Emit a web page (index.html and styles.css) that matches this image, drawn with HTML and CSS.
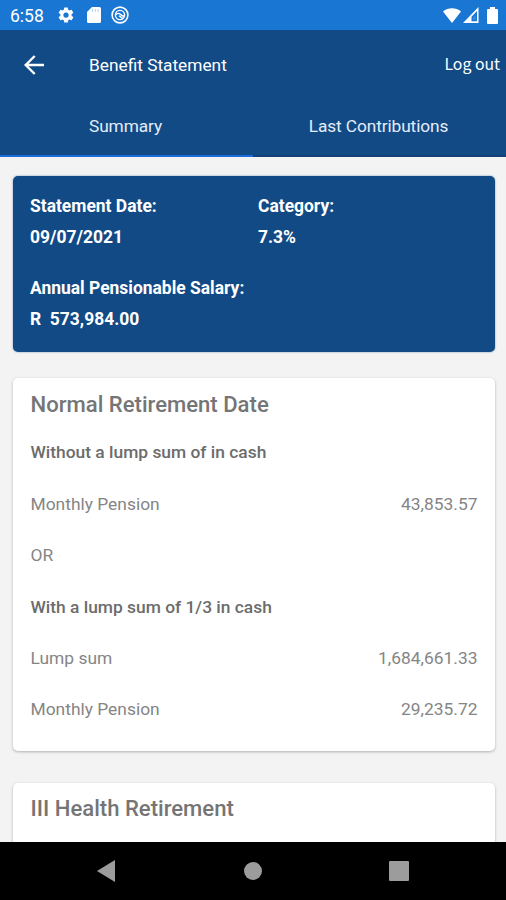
FILE: index.html
```html
<!DOCTYPE html>
<html lang="en">
<head>
<meta charset="utf-8">
<title>Benefit Statement</title>
<link rel="stylesheet" href="styles.css">
</head>
<body>
<div class="screen">
  <div class="status">
    <span class="clock">6:58</span>
    <svg class="gear" width="18" height="18" viewBox="0 0 24 24"><path fill="#fff" fill-rule="evenodd" d="M19.4 13a7.800 7.800 0 0 0 0-2l2.100-1.650a.5.5 0 0 0 .12-.64l-2-3.460a.5.5 0 0 0-.61-.22l-2.490 1a7.300 7.300 0 0 0-1.690-.98l-.38-2.650A.5.5 0 0 0 14 2h-4a.5.5 0 0 0-.49.42l-.38 2.650c-.61.25-1.170.58-1.690.98l-2.490-1a.5.5 0 0 0-.61.22l-2 3.460a.5.5 0 0 0 .12.64L4.570 11a7.900 7.900 0 0 0 0 2l-2.110 1.650a.5.5 0 0 0-.12.64l2 3.460c.12.22.39.3.61.22l2.490-1c.52.4 1.080.73 1.690.98l.38 2.650c.03.24.24.4.49.4h4c.25 0 .46-.18.49-.42l.38-2.650c.61-.25 1.170-.58 1.690-.98l2.490 1c.23.09.49 0 .61-.22l2-3.460a.5.5 0 0 0-.12-.64zM12 15.500a3.500 3.500 0 1 1 0-7 3.500 3.500 0 0 1 0 7z"/></svg>
    <svg class="sd" width="14" height="16" viewBox="0 0 14 16"><path fill="#fff" d="M5 0h7.500Q14 0 14 1.500v13q0 1.500-1.500 1.500h-11Q0 16 0 14.500V5z"/><path d="M5.500 2v3M8.300 2v3M11.100 2v3" stroke="#1976d2" stroke-width=".8" opacity=".4"/></svg>
    <svg class="disc" width="18" height="18" viewBox="0 0 18 18" fill="none" stroke="#fff"><circle cx="9" cy="9" r="7.900" stroke-width="1.600"/><circle cx="9" cy="9" r="4.600" stroke-width="1.400"/><path d="M4.800 8.600Q7.600 6.300 9.300 8.300T13.400 10.300M8 9.800L12 12.600" stroke-width="1.400"/></svg>
    <div class="signals">
      <svg width="18" height="15" viewBox="0 0 18 15"><path fill="#fff" d="M0 3.500C5-.9 13-.9 18 3.500L9 15z"/></svg>
      <svg class="cell" width="16" height="16" viewBox="0 0 16 16"><path fill="#fff" fill-rule="evenodd" d="M15.500 0v16H0zM14 4L8.500 9.700v4.600H14z"/><path fill="#fff" d="M10.200 10.300v2.800h2.400V7.700z" opacity=".15"/></svg>
      <svg width="11" height="17" viewBox="0 0 11 17"><path fill="#fff" d="M3 0h5v2h2q1 0 1 1v13q0 1-1 1H1q-1 0-1-1V3q0-1 1-1h2z"/></svg>
    </div>
  </div>
  <header class="appbar">
    <div class="titlebar">
      <svg class="back" width="20" height="20" viewBox="0 0 20 20" fill="none" stroke="#fff" stroke-width="2.400"><path d="M20 10H2M10.700 1L1.700 10l9 9"/></svg>
      <span class="title">Benefit Statement</span>
      <span class="logout">Log out</span>
    </div>
    <nav class="tabs">
      <span class="tab active">Summary</span>
      <span class="tab">Last Contributions</span>
    </nav>
  </header>
  <main class="content">
    <section class="card info">
      <div class="field"><span>Statement Date:</span><span>09/07/2021</span></div>
      <div class="field"><span>Category:</span><span>7.3%</span></div>
      <div class="field wide"><span>Annual Pensionable Salary:</span><span>R&nbsp; 573,984.00</span></div>
    </section>
    <section class="card normal">
      <h2>Normal Retirement Date</h2>
      <div class="row strong"><span>Without a lump sum of in cash</span></div>
      <div class="row"><span>Monthly Pension</span><span>43,853.57</span></div>
      <div class="row"><span>OR</span></div>
      <div class="row strong"><span>With a lump sum of 1/3 in cash</span></div>
      <div class="row"><span>Lump sum</span><span>1,684,661.33</span></div>
      <div class="row"><span>Monthly Pension</span><span>29,235.72</span></div>
    </section>
    <section class="card health">
      <h2>III Health Retirement</h2>
    </section>
  </main>
  <footer class="navbar">
    <svg width="18" height="22" viewBox="0 0 18 22"><path fill="#9c9c9c" d="M18 0v22L0 11z"/></svg>
    <svg class="home" width="18" height="18" viewBox="0 0 18 18"><circle cx="9" cy="9" r="9" fill="#9c9c9c"/></svg>
    <svg width="20" height="20" viewBox="0 0 20 20"><rect width="20" height="20" rx="1" fill="#9c9c9c"/></svg>
  </footer>
</div>
</body>
</html>
```

FILE: styles.css
```css
* { box-sizing: border-box; }
body { margin: 0; font-family: Roboto, sans-serif; }
svg { display: block; flex: none; }
span { white-space: pre; }
.screen { width: 506px; height: 900px; display: flex; flex-direction: column; overflow: hidden; background: #f3f3f3; }

.status { height: 30px; flex: none; display: flex; align-items: center; padding: 0 8px 0 10px; background: #1976d2; color: #fff; }
.clock { width: 47px; font-size: 17.500px; line-height: 30px; padding-top: 2px; }
.sd { margin-left: 12px; }
.disc { margin-left: 10px; }
.signals { margin-left: auto; display: flex; align-items: center; }
.cell { margin: 0 8px 0 2px; }

.appbar { height: 127px; flex: none; background: #124a86; color: #fff; }
.titlebar { height: 69px; display: flex; align-items: center; padding: 0 6px 0 24px; }
.title { margin-left: 45px; font-size: 17.300px; line-height: 20px; padding-top: 1px; }
.logout { margin-left: auto; font-family: "Noto Sans CJK SC", sans-serif; font-size: 15.800px; line-height: 20px; margin-top: -2px; }
.tabs { height: 58px; display: flex; }
.tab { flex: 1; display: flex; justify-content: center; padding: 17px 2px 0 0; font-size: 17.300px; letter-spacing: -.1px; line-height: 20px; color: #e4ecf8; border-bottom: 2px solid #153f7b; }
.active { border-color: #1b6ddc; }

.content { flex: 1; min-height: 0; overflow: hidden; padding: 19px 11px 0 13px; }
.card { border-radius: 5px; padding: 0 17.500px; background: #fff; box-shadow: 0 1px 3px rgba(0, 0, 0, .28); }
.info { height: 176px; padding: 20px 17px 0; background: #124a86; color: #fff; display: grid; grid-template-columns: 228px 1fr; align-content: start; row-gap: 20px; font-size: 17.450px; font-weight: 700; box-shadow: 0 0 2px rgba(18, 74, 134, .6); }
.field { display: flex; flex-direction: column; align-items: flex-start; gap: 11px; line-height: 20px; height: 62px; }
.wide { grid-column: 1 / 3; }

h2 { margin: 0; font-size: 22.100px; font-weight: 500; line-height: 26px; color: #757575; white-space: pre; }
.normal { height: 373px; margin-top: 26px; padding-top: 13px; }
.row { height: 20px; display: flex; justify-content: space-between; font-size: 17.400px; line-height: 20px; color: #858585; margin-top: 31.400px; }
.strong { font-weight: 500; color: #6c6c6c; }
h2 + .row { margin-top: 25.400px; }
.health { height: 120px; margin-top: 32px; padding-top: 12px; }

.navbar { height: 58px; flex: none; display: flex; align-items: center; justify-content: space-between; padding: 0 97px; background: #000; }
.home { margin-left: 2px; }
```
